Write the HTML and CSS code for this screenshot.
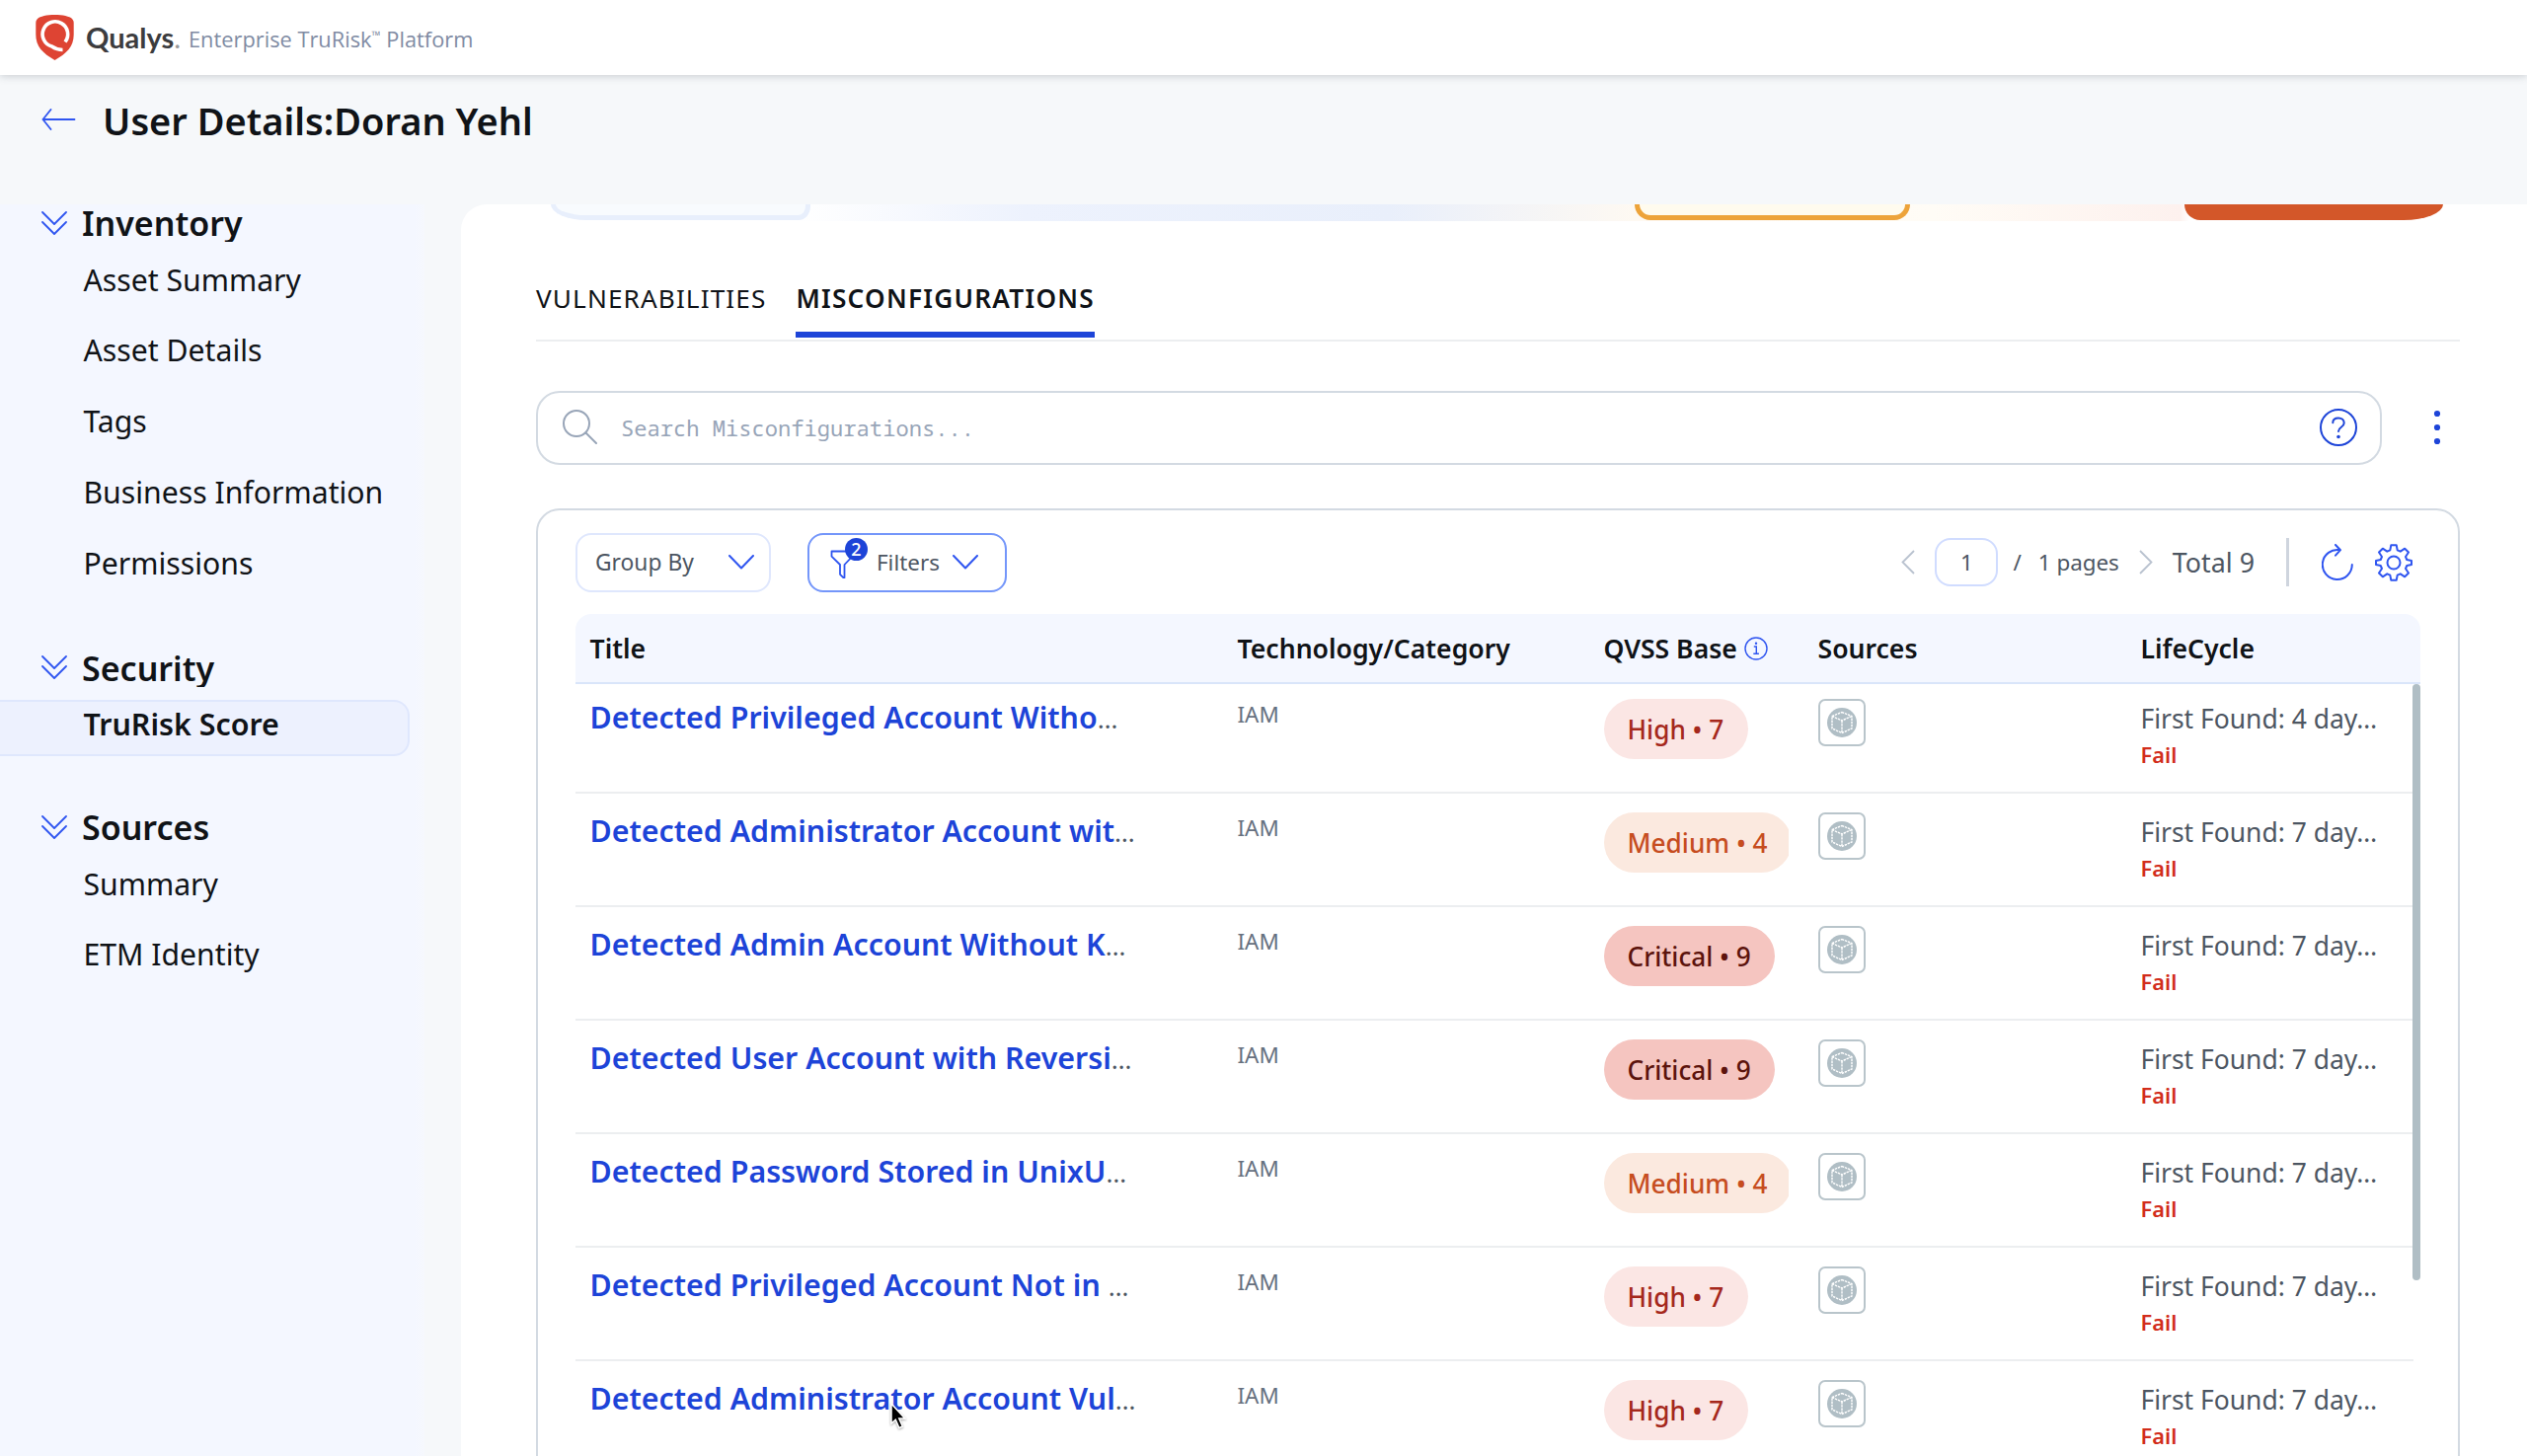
FILE: index.html
```html
<!DOCTYPE html>
<html lang="en">
<head>
    <meta charset="UTF-8">
    <meta name="viewport" content="width=device-width, initial-scale=1.0">
    <title>Qualys - User Details</title>
    <link rel="stylesheet" href="styles.css">
</head>
<body>

<!-- Shared icons -->
<svg class="icon-defs" width="0" height="0">
    <symbol id="chevrons" viewBox="0 0 26 24">
        <path d="M1 1l12 12L25 1M1 11l12 12 12-12" fill="none" stroke="currentColor" stroke-width="1.8" stroke-linecap="round" stroke-linejoin="round"/>
    </symbol>
    <symbol id="chevron-down" viewBox="0 0 26 15">
        <path d="M1 1l12 12.5L25 1" fill="none" stroke="currentColor" stroke-width="2" stroke-linecap="round" stroke-linejoin="round"/>
    </symbol>
    <symbol id="cube" viewBox="0 0 30 30">
        <circle cx="15" cy="15" r="15" fill="#b0bec5"/>
        <path d="M15 4.500L25 8.500v12.500L15 25.500 5 21V8.500zM5 8.500l10 4.500 10-4.500M15 13v12.500" fill="none" stroke="#fff" stroke-width="1.400" stroke-dasharray="2.400 .8"/>
    </symbol>
</svg>

<header class="topbar">
    <svg class="logo" viewBox="0 0 40 46">
        <path d="M20 0C12 0 5 1.500 2.500 4 1 5.500.8 7 .8 9v11c0 12 7 19 19.200 26C32.200 39 39.200 32 39.200 20V9c0-2-.2-3.500-1.700-5C35 1.500 28 0 20 0z" fill="#de4433"/>
        <path d="M30.500 27.500A12.800 12.800 0 1 0 17 32q5 3.500 11 3.500" fill="none" stroke="#fff" stroke-width="3.600"/>
        <circle cx="20.500" cy="19.500" r="9" fill="#de4433"/>
    </svg>
    <span class="brand">Qualys<i>.</i></span>
    <span class="product">Enterprise TruRisk<sup>™</sup> Platform</span>
</header>

<div class="page-title">
    <svg class="back" viewBox="0 0 34 22">
        <path d="M33 11H1M9 1L1 11l8 10" fill="none" stroke="#2f55f0" stroke-width="1.800" stroke-linecap="round" stroke-linejoin="round"/>
    </svg>
    <h1>User Details:Doran Yehl</h1>
</div>

<div class="layout">
    <nav class="sidebar">
        <div class="section">
            <h2><svg><use href="#chevrons"/></svg>Inventory</h2>
            <a>Asset Summary</a>
            <a>Asset Details</a>
            <a>Tags</a>
            <a>Business Information</a>
            <a>Permissions</a>
        </div>
        <div class="section">
            <h2><svg><use href="#chevrons"/></svg>Security</h2>
            <a class="active">TruRisk Score</a>
        </div>
        <div class="section">
            <h2><svg><use href="#chevrons"/></svg>Sources</h2>
            <a>Summary</a>
            <a>ETM Identity</a>
        </div>
    </nav>

    <main class="panel">
        <!-- bottom edge of the score banner, scrolled out of view -->
        <div class="score-strip">
            <div class="score score-low"></div>
            <div class="score score-medium"></div>
            <div class="score score-high"></div>
        </div>

        <div class="tabs">
            <a class="tab">VULNERABILITIES</a>
            <a class="tab selected">MISCONFIGURATIONS</a>
        </div>

        <div class="search-row">
            <div class="search">
                <svg class="search-icon" viewBox="0 0 35 35">
                    <circle cx="14" cy="14" r="13" fill="none" stroke="#98a5b8" stroke-width="2"/>
                    <path d="M23.500 23.500L34 34" stroke="#98a5b8" stroke-width="2" stroke-linecap="round"/>
                </svg>
                <span class="placeholder">Search Misconfigurations...</span>
                <svg class="help" viewBox="0 0 38 38">
                    <circle cx="19" cy="19" r="18" fill="none" stroke="#1d44d8" stroke-width="2"/>
                    <path d="M13.300 14.200c0-3 2.500-4.700 5.700-4.700s5.700 2 5.700 4.900c0 4.600-5.700 4.200-5.700 8.600" fill="none" stroke="#1d44d8" stroke-width="2" stroke-linecap="round"/>
                    <circle cx="19" cy="28.500" r="1.800" fill="#1d44d8"/>
                </svg>
            </div>
            <svg class="kebab" viewBox="0 0 8 36">
                <circle cx="4" cy="4" r="3.100"/>
                <circle cx="4" cy="18" r="3.100"/>
                <circle cx="4" cy="32" r="3.100"/>
            </svg>
        </div>

        <div class="card">
            <div class="toolbar">
                <div class="dropdown group-by">
                    <span>Group By</span>
                    <svg class="caret"><use href="#chevron-down"/></svg>
                </div>
                <div class="dropdown filters">
                    <span class="funnel">
                        <svg viewBox="0 0 24 30">
                            <path d="M1.500 1.500h21v5.200l-8 8.300v13.200h-1.200l-3.300-3.400V15L1.500 6.700z" fill="none" stroke="#2f55f0" stroke-width="1.800" stroke-linejoin="round"/>
                        </svg>
                        <b class="count">2</b>
                    </span>
                    <span>Filters</span>
                    <svg class="caret"><use href="#chevron-down"/></svg>
                </div>

                <div class="pager">
                    <svg class="arrow" viewBox="0 0 14 25"><path d="M13 1L1.500 12.500 13 24"/></svg>
                    <span class="page-no">1</span>
                    <span class="slash">/</span>
                    <span class="pages">1 pages</span>
                    <svg class="arrow" viewBox="0 0 14 25"><path d="M1 1l11.500 11.500L1 24"/></svg>
                    <span class="total">Total 9</span>
                    <span class="divider"></span>
                    <svg class="refresh" viewBox="0 0 32 37">
                        <path d="M30.800 21A15 15 0 1 1 18.500 6.200M14 1l5 5.200-5 5.500" fill="none" stroke="#2f55f0" stroke-width="2" stroke-linecap="round" stroke-linejoin="round"/>
                    </svg>
                    <svg class="gear" viewBox="0 0 38 38">
                        <path d="M16.300 1.200h5.400l1 5.200 3 1.300 4.500-3 3.800 3.800-3 4.500 1.300 3 4.700 1v4l-4.700 1-1.300 3 3 4.500-3.800 3.800-4.500-3-3 1.300-1 5.200h-5.400l-1-5.200-3-1.300-4.500 3L4 29.500 7 25l-1.300-3L1 21v-4l4.700-1L7 13 4 8.500l3.800-3.800 4.500 3 3-1.300z" fill="none" stroke="#2f55f0" stroke-width="2" stroke-linejoin="round"/>
                        <circle cx="19" cy="19" r="6.500" fill="none" stroke="#2f55f0" stroke-width="2"/>
                    </svg>
                </div>
            </div>

            <div class="table">
                <div class="thead">
                    <span>Title</span>
                    <span>Technology/Category</span>
                    <span>QVSS Base
                        <svg class="info" viewBox="0 0 24 24">
                            <circle cx="12" cy="12" r="11" fill="none" stroke="#2f55f0" stroke-width="1.400"/>
                            <path d="M9.800 10h2.500v7M9.300 17.300h5.600" fill="none" stroke="#2f55f0" stroke-width="1.400"/>
                            <circle cx="12" cy="6.700" r="1.200" fill="#2f55f0"/>
                        </svg>
                    </span>
                    <span>Sources</span>
                    <span>LifeCycle</span>
                </div>
                <div class="tbody">
                    <div class="row">
                        <div class="title"><a>Detected Privileged Account Witho</a>…</div>
                        <div class="tech">IAM</div>
                        <div class="qvss"><span class="pill high">High • 7</span></div>
                        <div><span class="source"><svg><use href="#cube"/></svg></span></div>
                        <div class="life">First Found: 4 day…<em>Fail</em></div>
                    </div>
                    <div class="row">
                        <div class="title"><a>Detected Administrator Account wit</a>…</div>
                        <div class="tech">IAM</div>
                        <div class="qvss"><span class="pill medium">Medium • 4</span></div>
                        <div><span class="source"><svg><use href="#cube"/></svg></span></div>
                        <div class="life">First Found: 7 day…<em>Fail</em></div>
                    </div>
                    <div class="row">
                        <div class="title"><a>Detected Admin Account Without K</a>…</div>
                        <div class="tech">IAM</div>
                        <div class="qvss"><span class="pill critical">Critical • 9</span></div>
                        <div><span class="source"><svg><use href="#cube"/></svg></span></div>
                        <div class="life">First Found: 7 day…<em>Fail</em></div>
                    </div>
                    <div class="row">
                        <div class="title"><a>Detected User Account with Reversi</a>…</div>
                        <div class="tech">IAM</div>
                        <div class="qvss"><span class="pill critical">Critical • 9</span></div>
                        <div><span class="source"><svg><use href="#cube"/></svg></span></div>
                        <div class="life">First Found: 7 day…<em>Fail</em></div>
                    </div>
                    <div class="row">
                        <div class="title"><a>Detected Password Stored in UnixU</a>…</div>
                        <div class="tech">IAM</div>
                        <div class="qvss"><span class="pill medium">Medium • 4</span></div>
                        <div><span class="source"><svg><use href="#cube"/></svg></span></div>
                        <div class="life">First Found: 7 day…<em>Fail</em></div>
                    </div>
                    <div class="row">
                        <div class="title"><a>Detected Privileged Account Not in </a>…</div>
                        <div class="tech">IAM</div>
                        <div class="qvss"><span class="pill high">High • 7</span></div>
                        <div><span class="source"><svg><use href="#cube"/></svg></span></div>
                        <div class="life">First Found: 7 day…<em>Fail</em></div>
                    </div>
                    <div class="row">
                        <div class="title"><a>Detected Administrator Account Vul</a>…</div>
                        <div class="tech">IAM</div>
                        <div class="qvss"><span class="pill high">High • 7</span></div>
                        <div><span class="source"><svg><use href="#cube"/></svg></span></div>
                        <div class="life">First Found: 7 day…<em>Fail</em></div>
                    </div>
                    <div class="scrollbar"></div>
                </div>
            </div>
        </div>
    </main>
</div>

<svg class="cursor" viewBox="0 0 18 30">
    <path d="M2 2v20l4.300-3.800 3.600 8.300 3.400-1.500-3.500-8h6z" fill="#000" stroke="#fff" stroke-width="1.500"/>
</svg>

</body>
</html>
```
FILE: styles.css
```css
* {
    box-sizing: border-box;
}

body {
    margin: 0;
    height: 1475px;
    overflow: hidden;
    background-color: #f6f8fa;
    font-family: "Noto Sans", sans-serif;
    color: #101317;
}

svg {
    display: block;
    flex: none;
}

.icon-defs {
    position: absolute;
}

/* Top bar */
.topbar {
    display: flex;
    height: 76px;
    padding-left: 35px;
    background-color: #fff;
    box-shadow: 0 1px 8px rgba(60, 70, 85, 0.25);
}

.logo {
    width: 41px;
    height: 46px;
    margin-top: 15px;
}

.brand {
    width: 98px;
    margin-left: 11px;
    font: 700 29px/76px Lato, sans-serif;
    color: #3c3c3e;
}

.brand i {
    font-style: normal;
    font-weight: 400;
    color: #999;
}

.product {
    margin-left: 6px;
    font: 400 21.8px/80px "Open Sans", sans-serif;
    color: #808ba3;
    white-space: nowrap;
}

.product sup {
    font-size: 12px;
    line-height: 0;
    vertical-align: 8px;
}

.page-title {
    display: flex;
    height: 131px;
    padding-left: 42px;
}

.back {
    width: 35px;
    height: 22px;
    margin-top: 34px;
}

h1 {
    margin: 0 0 0 27px;
    font-size: 38px;
    font-weight: 600;
    line-height: 93px;
}

.layout {
    display: flex;
    height: 1268px;
}

/* Sidebar */
.sidebar {
    width: 430px;
    margin-right: 37px;
    flex: none;
    background: linear-gradient(90deg, #f4f7ff 420px, #f6f8fd);
}

.section {
    margin-bottom: 51px;
}

.section h2 {
    display: flex;
    align-items: flex-start;
    height: 38px;
    margin: 0 0 2.6px;
    padding-left: 42px;
    overflow: hidden;
    font-size: 34px;
    font-weight: 600;
    line-height: 38px;
}

.section h2 svg {
    width: 26px;
    height: 24px;
    margin: 6.5px 15px 0 0;
    color: #2f55f0;
}

.section a {
    display: block;
    height: 71.8px;
    padding-left: 84.5px;
    font-size: 30.2px;
    line-height: 71.8px;
}

.section a.active {
    width: 415px;
    height: 57px;
    margin: 13.5px 0 53px;
    border: 2px solid #dfe7fd;
    border-left: none;
    border-radius: 0 16px 16px 0;
    background-color: #edf1fe;
    font-size: 30.4px;
    font-weight: 600;
    line-height: 45px;
}

/* Main panel */
.panel {
    flex: 1;
    padding: 0 68px 0 76px;
    background-color: #fff;
    border-top-left-radius: 26px;
    overflow: hidden;
}

.score-strip {
    display: flex;
    width: 1935px;
    height: 16.7px;
    margin-left: 15px;
    background: linear-gradient(90deg, #fff 250px, #edf2fd 480px, #e9effb 850px, #fef9f2 1100px, #fffcf6 1400px, #fdf1ee 1650px, #fff 1660px);
}

.score {
    height: 16px;
}

.score-low {
    width: 263px;
    border: 5px solid #e8effc;
    border-top: none;
    border-radius: 0 0 12px 36px / 0 0 14px 16px;
    background-color: #f8fbfe;
}

.score-medium {
    width: 279px;
    margin-left: 835px;
    border: 5px solid #eda33a;
    border-top: none;
    border-radius: 0 0 16px 16px;
    background-color: #fffbee;
}

.score-high {
    width: 262px;
    margin-left: 278px;
    border-radius: 0 0 40px 16px / 0 0 16px 16px;
    background-color: #d35729;
}

.tabs {
    display: flex;
    gap: 30px;
    margin-top: 58px;
    padding-bottom: 1.5px;
    border-bottom: 2px solid #eceef0;
}

.tab {
    height: 60.5px;
    font-size: 26.2px;
    line-height: 40px;
    letter-spacing: 1.1px;
    border-bottom: 6.7px solid transparent;
}

.tab.selected {
    font-weight: 600;
    letter-spacing: 1.25px;
    border-bottom-color: #1d44d8;
}

/* Search */
.search-row {
    display: flex;
    align-items: center;
    margin-top: 50.5px;
}

.search {
    display: flex;
    align-items: center;
    width: 1870px;
    height: 75px;
    padding: 0 23px 0 25px;
    border: 2px solid #d3dae2;
    border-radius: 24px;
}

.search-icon {
    width: 35px;
    height: 35px;
    margin-top: -2px;
}

.placeholder {
    flex: 1;
    margin: -2px 0 0 24px;
    font-family: "Noto Sans Mono", "DejaVu Sans Mono", monospace;
    font-size: 22.1px;
    color: #98a5b8;
}

.help {
    width: 38px;
    height: 38px;
    margin-top: -2px;
}

.kebab {
    width: 8px;
    height: 36px;
    margin: -2px 0 0 52px;
    fill: #1d44d8;
}

/* Table card */
.card {
    width: 1949px;
    height: 1100px;
    margin-top: 43.5px;
    padding: 0 38px;
    border: 2px solid #d3dae2;
    border-radius: 24px;
}

.toolbar {
    display: flex;
    align-items: center;
    height: 60px;
    margin-top: 23px;
    font-size: 22.4px;
    color: #4d5662;
}

.dropdown {
    display: flex;
    align-items: center;
    height: 60px;
    border: 2px solid #dfe7fd;
    border-radius: 16px;
}

.group-by {
    width: 198px;
    padding-left: 18px;
    font-size: 22.8px;
    line-height: 56px;
}

.group-by .caret {
    margin-left: 35px;
}

.filters {
    width: 202px;
    margin-left: 37px;
    padding-left: 21px;
    border-color: #7496fa;
}

.caret {
    width: 26px;
    height: 15px;
    color: #2f55f0;
}

.filters .caret {
    margin-left: 13px;
}

.funnel {
    position: relative;
    width: 24px;
    margin-right: 23px;
}

.funnel svg {
    width: 24px;
    height: 30px;
    margin-top: 4px;
}

.count {
    position: absolute;
    top: -8px;
    left: 15px;
    width: 23px;
    height: 23px;
    border-radius: 50%;
    background-color: #1d44d8;
    color: #fff;
    font-size: 18px;
    font-weight: 500;
    line-height: 22px;
    text-align: center;
}

.pager {
    display: flex;
    align-items: center;
    margin-left: auto;
    padding-right: 8px;
}

.arrow {
    width: 14px;
    height: 25px;
    fill: none;
    stroke: #b9c2cf;
    stroke-width: 1.8;
}

.page-no {
    width: 64px;
    height: 49px;
    margin: 0 15px 0 20px;
    border: 2px solid #d0dcff;
    border-radius: 16px;
    line-height: 45px;
    text-align: center;
}

.pages {
    margin: 0 20px 0 17px;
}

.total {
    margin: 0 32px 0 20px;
    font-size: 26.8px;
}

.divider {
    width: 3px;
    height: 49px;
    background-color: #cfd5de;
}

.refresh {
    width: 32px;
    height: 37px;
    margin-left: 33px;
}

.gear {
    width: 38px;
    height: 38px;
    margin-left: 22px;
}

.table {
    margin-top: 22.5px;
}

.thead,
.row {
    display: grid;
    grid-template-columns: 656px 371px 217px 327px 1fr;
    padding-left: 14.5px;
}

.thead {
    height: 71px;
    border-bottom: 2px solid #d9e5fa;
    border-radius: 16px 16px 0 0;
    background-color: #f4f7ff;
    font-size: 26.6px;
    font-weight: 600;
    line-height: 68px;
}

.thead span {
    display: flex;
    align-items: center;
    gap: 7px;
}

.info {
    width: 24px;
    height: 24px;
}

.tbody {
    position: relative;
    margin-top: -4px;
}

.row {
    height: 115px;
    width: 1862px;
    padding-top: 19px;
    border-bottom: 2px solid #eceef0;
}

.title {
    font-size: 26.2px;
    line-height: 36px;
    padding-top: 1px;
    color: #4d5662;
    white-space: pre;
}

.title a {
    font-size: 30.35px;
    font-weight: 600;
    color: #1d44d8;
}

.tech {
    font-size: 22.4px;
    line-height: 32px;
    color: #667080;
}

.qvss {
    width: 187px;
    overflow: hidden;
}

.pill {
    display: inline-block;
    height: 61px;
    padding: 0 24.5px 0 24px;
    border-radius: 31px;
    font-size: 26.2px;
    font-weight: 500;
    line-height: 63px;
    white-space: nowrap;
}

.high {
    background-color: #fbe6e4;
    color: #a5281c;
}

.medium {
    background-color: #fbe9df;
    color: #c64d1f;
}

.critical {
    background-color: #f5c5c0;
    color: #5c130c;
}

.source {
    display: flex;
    align-items: center;
    justify-content: center;
    width: 48px;
    height: 48px;
    border: 2px solid #b9c5cb;
    border-radius: 7px;
}

.source svg {
    width: 30px;
    height: 30px;
}

.life {
    font-size: 26.45px;
    line-height: 40px;
    color: #4d5662;
}

.life em {
    display: block;
    font-size: 21.8px;
    font-style: normal;
    font-weight: 600;
    line-height: 34px;
    color: #d22d1c;
}

.scrollbar {
    position: absolute;
    top: 4px;
    right: 0;
    width: 8px;
    height: 604px;
    border-radius: 4px;
    background-color: #b0bec5;
}

.cursor {
    position: absolute;
    left: 901px;
    top: 1420px;
    width: 18px;
    height: 30px;
    filter: drop-shadow(0 1px 1px rgba(0, 0, 0, 0.35));
}
```
